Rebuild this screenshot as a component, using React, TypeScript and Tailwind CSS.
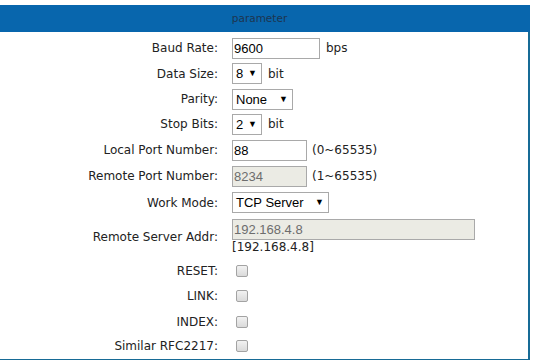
import type { ReactNode } from 'react';

const label = "text-right text-[12px] text-[#222] [font-family:'DejaVu_Sans',Verdana,sans-serif]";
const note = "text-[12px] text-[#222] [font-family:'DejaVu_Sans',Verdana,sans-serif]";
const field = "h-[21px] border border-[#a9a9a9] px-[1px] text-[13px] leading-[19px] [font-family:'Liberation_Sans',Arial,sans-serif]";

function Row({ name, h, children }: { name: string; h: string; children: ReactNode }) {
  return (
    <div className={`grid grid-cols-[227px_1fr] gap-x-[14px] items-center ${h}`}>
      <div className={label}>{name}</div>
      <div className="flex items-center">{children}</div>
    </div>
  );
}

function Select({ value, w }: { value: string; w: string }) {
  return (
    <div className={`${field} ${w} flex items-center justify-between pl-[3px] pr-[4px] text-black bg-white`}>
      <span>{value}</span>
      <span className="text-[9px] leading-none">▼</span>
    </div>
  );
}

function Check() {
  return (
    <div className="ml-[4px] w-[12px] h-[12px] rounded-[2px] border border-[#a3a3a3] bg-gradient-to-b from-[#f2f2f2] to-[#dadada]" />
  );
}

export default function App() {
  return (
    <div className="w-[534px] h-[360px] bg-white overflow-hidden">
      <div className="-ml-[11px] w-[541px] mt-[5px]">
        <div className="h-[27px] bg-[#0866ad] flex items-center justify-center text-[10.5px] text-[#1d3550] [font-family:'DejaVu_Sans',Verdana,sans-serif]">
          parameter
        </div>
        <div className="border-r-2 border-b-2 border-l-2 border-[#176b96] pt-[4px] pb-[1px]">
          <Row name="Baud Rate:" h="h-[24px]">
            <div className={`${field} w-[88px] text-black`}>9600</div>
            <span className={`${note} ml-[6px]`}>bps</span>
          </Row>
          <Row name="Data Size:" h="h-[27px]">
            <Select value="8" w="w-[30px]" />
            <span className={`${note} ml-[6px]`}>bit</span>
          </Row>
          <Row name="Parity:" h="h-[24px]">
            <Select value="None" w="w-[61px]" />
          </Row>
          <Row name="Stop Bits:" h="h-[26px]">
            <Select value="2" w="w-[30px]" />
            <span className={`${note} ml-[6px]`}>bit</span>
          </Row>
          <Row name="Local Port Number:" h="h-[26px]">
            <div className={`${field} w-[75px] text-black`}>88</div>
            <span className={`${note} ml-[5px]`}>(0~65535)</span>
          </Row>
          <Row name="Remote Port Number:" h="h-[26px]">
            <div className={`${field} w-[75px] text-[#6d6d6d] bg-[#ebebe4]`}>8234</div>
            <span className={`${note} ml-[5px]`}>(1~65535)</span>
          </Row>
          <Row name="Work Mode:" h="h-[27px]">
            <Select value="TCP Server" w="w-[97px]" />
          </Row>
          <div className="grid grid-cols-[227px_1fr] gap-x-[14px] items-center h-[42px]">
            <div className={label}>Remote Server Addr:</div>
            <div className="flex flex-col items-start">
              <div className={`${field} w-[243px] text-[#6d6d6d] bg-[#ebebe4]`}>192.168.4.8</div>
              <span className={`${note} leading-[15px]`}>[192.168.4.8]</span>
            </div>
          </div>
          <Row name="RESET:" h="h-[25px]">
            <Check />
          </Row>
          <Row name="LINK:" h="h-[26px]">
            <Check />
          </Row>
          <Row name="INDEX:" h="h-[25px]">
            <Check />
          </Row>
          <Row name="Similar RFC2217:" h="h-[24px]">
            <Check />
          </Row>
        </div>
      </div>
    </div>
  );
}
